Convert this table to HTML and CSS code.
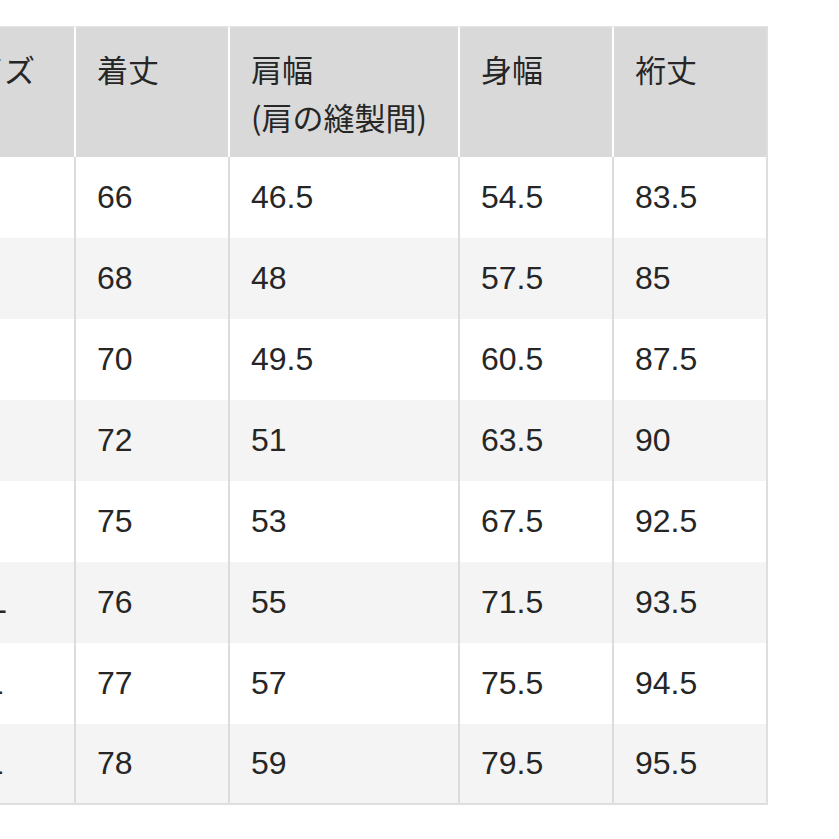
FILE: index.html
```html
<!DOCTYPE html>
<html lang="ja">
<head>
<meta charset="utf-8">
<title>サイズ表</title>
<link rel="stylesheet" href="styles.css">
</head>
<body>
<div class="table">
  <div class="row head">
    <div class="cell">サイズ</div>
    <div class="cell">着丈</div>
    <div class="cell">肩幅<br>(肩の縫製間)</div>
    <div class="cell">身幅</div>
    <div class="cell">裄丈</div>
  </div>
  <div class="row body">
    <div class="cell size">XS</div><div class="cell">66</div><div class="cell">46.5</div><div class="cell">54.5</div><div class="cell">83.5</div>
  </div>
  <div class="row body alt">
    <div class="cell size">S</div><div class="cell">68</div><div class="cell">48</div><div class="cell">57.5</div><div class="cell">85</div>
  </div>
  <div class="row body">
    <div class="cell size">M</div><div class="cell">70</div><div class="cell">49.5</div><div class="cell">60.5</div><div class="cell">87.5</div>
  </div>
  <div class="row body alt">
    <div class="cell size">L</div><div class="cell">72</div><div class="cell">51</div><div class="cell">63.5</div><div class="cell">90</div>
  </div>
  <div class="row body">
    <div class="cell size">XL</div><div class="cell">75</div><div class="cell">53</div><div class="cell">67.5</div><div class="cell">92.5</div>
  </div>
  <div class="row body alt">
    <div class="cell size">XXL</div><div class="cell">76</div><div class="cell">55</div><div class="cell">71.5</div><div class="cell">93.5</div>
  </div>
  <div class="row body">
    <div class="cell size">3XL</div><div class="cell">77</div><div class="cell">57</div><div class="cell">75.5</div><div class="cell">94.5</div>
  </div>
  <div class="row body alt last">
    <div class="cell size">4XL</div><div class="cell">78</div><div class="cell">59</div><div class="cell">79.5</div><div class="cell">95.5</div>
  </div>
</div>
</body>
</html>
```
FILE: styles.css
```css
html, body {
  margin: 0;
  padding: 0;
  background: #ffffff;
  overflow: hidden;
}

body {
  font-family: "Liberation Sans", "Noto Sans CJK JP", sans-serif;
  color: #262626;
}

.table {
  margin: 26px 0 0 -78px;
  width: 846px;
}

.row {
  display: grid;
  grid-template-columns: 152px 152px 228px 152px 152px;
  column-gap: 2px;
  border-right: 2px solid #dedede;
}

.head {
  background: #ffffff;
  border-top: 1px solid #e6e6e6;
}

.head .cell {
  background: #d9d9d9;
  height: 130px;
  box-sizing: border-box;
  padding: 18px 20px 0 21px;
  font-size: 31px;
  line-height: 48px;
  font-family: "Noto Sans CJK JP", "Liberation Sans", sans-serif;
}

.body {
  background: #dcdcdc;
}

.body .cell {
  background: #ffffff;
  height: 81px;
  box-sizing: border-box;
  display: flex;
  align-items: center;
  padding: 0 20px 0 21px;
  font-size: 32px;
}

.body .size {
  padding-left: 24px;
}

.alt .cell {
  background: #f4f4f4;
}

.last {
  border-bottom: 2px solid #dedede;
}

.last .cell {
  height: 79px;
}
```
